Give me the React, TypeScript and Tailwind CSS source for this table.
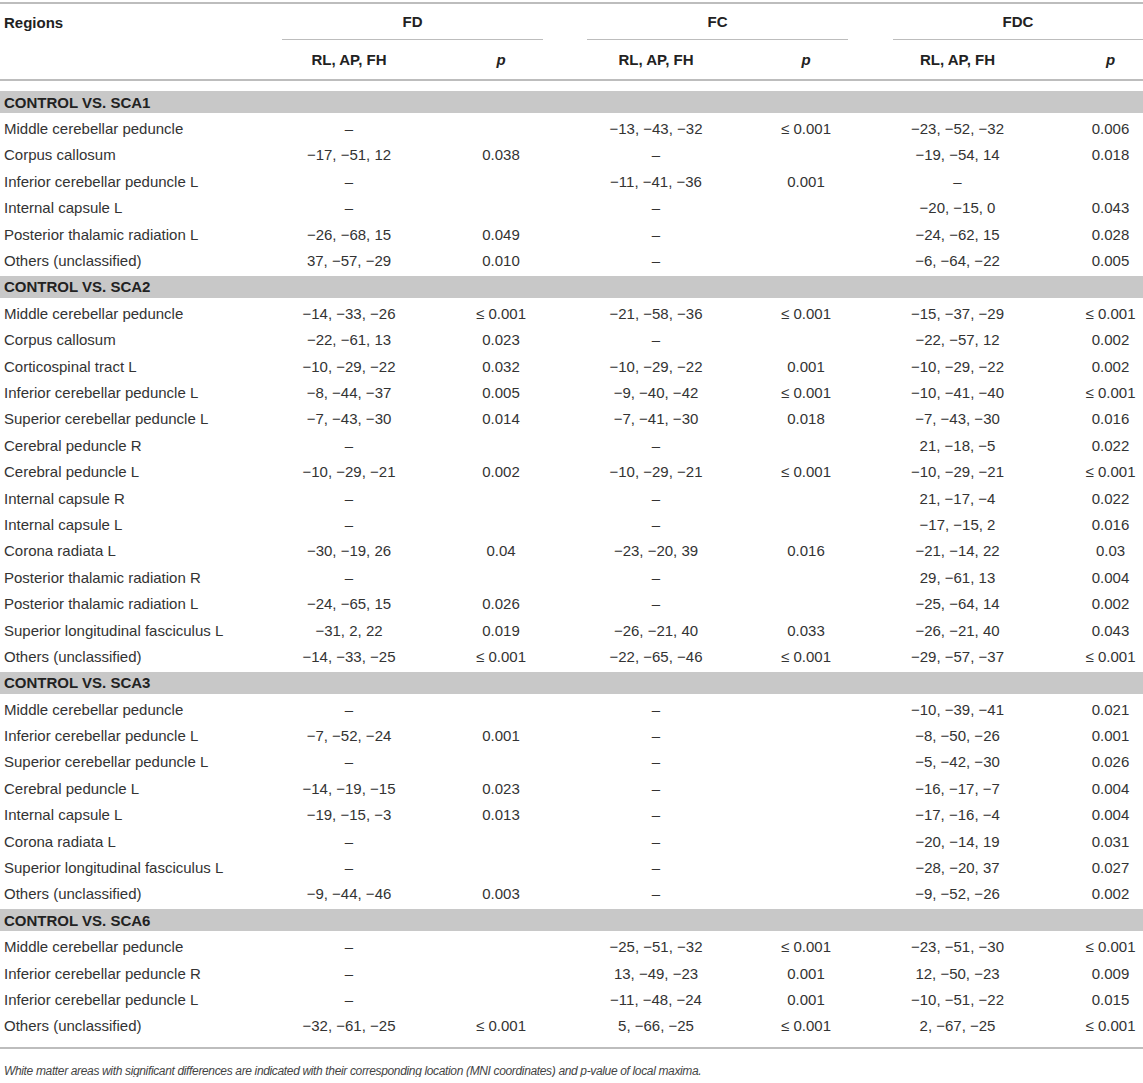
import React from "react";

type Row = [string, string, string, string, string, string, string];
type Section = { title: string; rows: Row[] };

const D = "–";

const sections: Section[] = [
  {
    title: "CONTROL VS. SCA1",
    rows: [
      ["Middle cerebellar peduncle", D, "", "−13, −43, −32", "≤ 0.001", "−23, −52, −32", "0.006"],
      ["Corpus callosum", "−17, −51, 12", "0.038", D, "", "−19, −54, 14", "0.018"],
      ["Inferior cerebellar peduncle L", D, "", "−11, −41, −36", "0.001", D, ""],
      ["Internal capsule L", D, "", D, "", "−20, −15, 0", "0.043"],
      ["Posterior thalamic radiation L", "−26, −68, 15", "0.049", D, "", "−24, −62, 15", "0.028"],
      ["Others (unclassified)", "37, −57, −29", "0.010", D, "", "−6, −64, −22", "0.005"],
    ],
  },
  {
    title: "CONTROL VS. SCA2",
    rows: [
      ["Middle cerebellar peduncle", "−14, −33, −26", "≤ 0.001", "−21, −58, −36", "≤ 0.001", "−15, −37, −29", "≤ 0.001"],
      ["Corpus callosum", "−22, −61, 13", "0.023", D, "", "−22, −57, 12", "0.002"],
      ["Corticospinal tract L", "−10, −29, −22", "0.032", "−10, −29, −22", "0.001", "−10, −29, −22", "0.002"],
      ["Inferior cerebellar peduncle L", "−8, −44, −37", "0.005", "−9, −40, −42", "≤ 0.001", "−10, −41, −40", "≤ 0.001"],
      ["Superior cerebellar peduncle L", "−7, −43, −30", "0.014", "−7, −41, −30", "0.018", "−7, −43, −30", "0.016"],
      ["Cerebral peduncle R", D, "", D, "", "21, −18, −5", "0.022"],
      ["Cerebral peduncle L", "−10, −29, −21", "0.002", "−10, −29, −21", "≤ 0.001", "−10, −29, −21", "≤ 0.001"],
      ["Internal capsule R", D, "", D, "", "21, −17, −4", "0.022"],
      ["Internal capsule L", D, "", D, "", "−17, −15, 2", "0.016"],
      ["Corona radiata L", "−30, −19, 26", "0.04", "−23, −20, 39", "0.016", "−21, −14, 22", "0.03"],
      ["Posterior thalamic radiation R", D, "", D, "", "29, −61, 13", "0.004"],
      ["Posterior thalamic radiation L", "−24, −65, 15", "0.026", D, "", "−25, −64, 14", "0.002"],
      ["Superior longitudinal fasciculus L", "−31, 2, 22", "0.019", "−26, −21, 40", "0.033", "−26, −21, 40", "0.043"],
      ["Others (unclassified)", "−14, −33, −25", "≤ 0.001", "−22, −65, −46", "≤ 0.001", "−29, −57, −37", "≤ 0.001"],
    ],
  },
  {
    title: "CONTROL VS. SCA3",
    rows: [
      ["Middle cerebellar peduncle", D, "", D, "", "−10, −39, −41", "0.021"],
      ["Inferior cerebellar peduncle L", "−7, −52, −24", "0.001", D, "", "−8, −50, −26", "0.001"],
      ["Superior cerebellar peduncle L", D, "", D, "", "−5, −42, −30", "0.026"],
      ["Cerebral peduncle L", "−14, −19, −15", "0.023", D, "", "−16, −17, −7", "0.004"],
      ["Internal capsule L", "−19, −15, −3", "0.013", D, "", "−17, −16, −4", "0.004"],
      ["Corona radiata L", D, "", D, "", "−20, −14, 19", "0.031"],
      ["Superior longitudinal fasciculus L", D, "", D, "", "−28, −20, 37", "0.027"],
      ["Others (unclassified)", "−9, −44, −46", "0.003", D, "", "−9, −52, −26", "0.002"],
    ],
  },
  {
    title: "CONTROL VS. SCA6",
    rows: [
      ["Middle cerebellar peduncle", D, "", "−25, −51, −32", "≤ 0.001", "−23, −51, −30", "≤ 0.001"],
      ["Inferior cerebellar peduncle R", D, "", "13, −49, −23", "0.001", "12, −50, −23", "0.009"],
      ["Inferior cerebellar peduncle L", D, "", "−11, −48, −24", "0.001", "−10, −51, −22", "0.015"],
      ["Others (unclassified)", "−32, −61, −25", "≤ 0.001", "5, −66, −25", "≤ 0.001", "2, −67, −25", "≤ 0.001"],
    ],
  },
];

const cols = "grid grid-cols-[261px_176px_128px_182px_118px_185px_93px]";

function DataRow({ row }: { row: Row }) {
  return (
    <div className={`${cols} h-[26.4px] items-center`}>
      <div className="pl-[4px] whitespace-nowrap">{row[0]}</div>
      <div className="text-center">{row[1]}</div>
      <div className="text-center">{row[2]}</div>
      <div className="text-center">{row[3]}</div>
      <div className="text-center">{row[4]}</div>
      <div className="text-center">{row[5]}</div>
      <div className="text-center pl-[28px]">{row[6]}</div>
    </div>
  );
}

export default function App() {
  return (
    <div
      className="w-[1143px] bg-white text-[15px] text-[#333] leading-none"
      style={{ fontFamily: '"Liberation Sans", Arial, sans-serif' }}
    >
      {/* header */}
      <div className="mt-[2px] border-t-2 border-[#bdbdbd] border-b-2 font-bold text-[#222]">
        <div className={`${cols} h-[36px] items-center`}>
          <div className="pl-[4px]">Regions</div>
          <div className="col-span-2 h-full flex items-center justify-center ml-[21px] mr-[22px] border-b border-[#bdbdbd]">FD</div>
          <div className="col-span-2 h-full flex items-center justify-center ml-[22px] mr-[17px] border-b border-[#bdbdbd]">FC</div>
          <div className="col-span-2 h-full flex items-center justify-center ml-[28px] border-b border-[#bdbdbd]">FDC</div>
        </div>
        <div className={`${cols} h-[39px] items-center`}>
          <div />
          <div className="text-center">RL, AP, FH</div>
          <div className="text-center italic">p</div>
          <div className="text-center">RL, AP, FH</div>
          <div className="text-center italic">p</div>
          <div className="text-center">RL, AP, FH</div>
          <div className="text-center italic pl-[28px]">p</div>
        </div>
      </div>

      {/* body */}
      <div className="mt-[8px] border-b-2 border-[#bdbdbd] pb-[8px]">
        {sections.map((s) => (
          <div key={s.title}>
            <div className="h-[26.4px] flex items-center">
              <div className="w-full h-[22px] bg-[#c8c8c8] flex items-center pl-[4px] font-bold text-[#222]">
                {s.title}
              </div>
            </div>
            {s.rows.map((r, i) => (
              <DataRow key={i} row={r} />
            ))}
          </div>
        ))}
      </div>

      {/* footnote */}
      <p className="pt-[16px] pl-[4px] text-[12px] tracking-[-0.35px] italic text-[#444] whitespace-nowrap">
        White matter areas with significant differences are indicated with their corresponding location (MNI coordinates) and p-value of local maxima.
      </p>
    </div>
  );
}
